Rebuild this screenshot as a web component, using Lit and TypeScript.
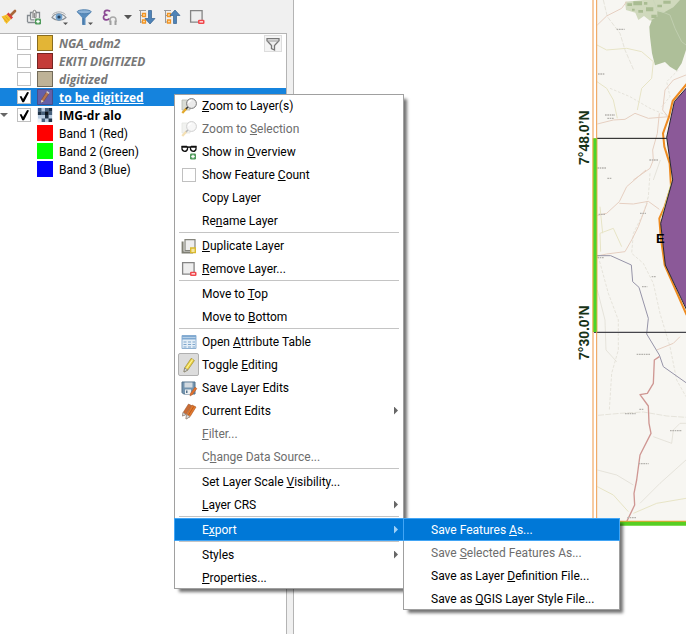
import { LitElement, html, svg, css, nothing, TemplateResult } from "lit";
import { customElement, property } from "lit/decorators.js";
import { classMap } from "lit/directives/class-map.js";
import { styleMap } from "lit/directives/style-map.js";

type Glyph = ReturnType<typeof svg>;

const plus = svg`<rect x="10" y="10.500" width="6" height="6" rx="1.200" fill="#4f9a5b"/><path d="M13 11.700v3.600M11.200 13.500h3.600" stroke="#fff" stroke-width="1.300"/>`;
const minus = svg`<rect x="10" y="11.700" width="6.500" height="4.300" rx="1.300" fill="#f0474c"/><path d="M11.500 13.850h3.500" stroke="#fff" stroke-width="1.200"/>`;
const caret = svg`<path d="M13 14.500h5l-2.500 2.500z" fill="#555"/>`;
const treeLines = svg`<path d="M1 2.500h7M2.500 3v12M2.500 7.500h3M2.500 14h3" stroke="#9a9a9a" fill="none"/><path d="M4.500 5.500h3v3h-3zM4.500 12h3v3h-3z" fill="#fbe3b8" stroke="#f29423" stroke-width="1.300"/>`;

const glyphs: Record<string, Glyph> = {
  style: svg`<path d="M10.500 7.500 15 3" stroke="#a9683a" stroke-width="2.600" stroke-linecap="round"/><path d="M7.500 5.500 12 10.500" stroke="#d8433d" stroke-width="2.800"/><path d="M1.500 8.500 7 6.500l4 4.500-4.500 5c-.6-1-1-1.500-2-2.200-.5-2-1.500-3-3-5.300z" fill="#f6c12d"/><path d="m3 9.500 4 4.500M5.500 8.500l3.500 4" stroke="#d99a1a" stroke-width=".8"/>`,
  group: svg`<path d="M2.500 14V7.500H5M2.500 14.500h8M5.500 11.500V4.500h2m3.500 0h3.500V10M5.500 11.800h4" stroke="#858b90" stroke-width="1.300" fill="none"/><path d="M8 10V4q0-1.700 1.500-1.700T11 4v5q0 1-.9 1T9.300 9V5" stroke="#777" fill="none"/>${plus}`,
  eye: svg`<path d="M2 9.500C5 4.500 12 4.500 16 9.500 12 13.500 6 13.500 2 9.500z" fill="#e9edf0" stroke="#8a8f94" stroke-width="1.200"/><path d="M2.500 6.500C6 3 12 3 15.500 6.500" stroke="#a9adb0" fill="none"/><circle cx="9" cy="9" r="3.400" fill="#6fa0cc"/><circle cx="9" cy="9" r="1.600" fill="#27415c"/>${caret}`,
  funnel: svg`<path d="M2.500 4.500 7.300 10v7h3.200v-7l5.500-5.500z" fill="#5a8dbd"/><ellipse cx="9.200" cy="3.800" rx="7" ry="2" fill="#8db3d8" stroke="#4d7fae"/><path d="M8 10v6.500" stroke="#3c6d9c"/>${caret}`,
  expression: svg`<path d="M10 3.500C9 1.800 4.300 2 4.400 4.700c0 1.600 1.400 2.100 3.100 2.100-2.500 0-4 .7-4 2.600C3.500 12.300 8 12.500 9.500 10.500" stroke="#8c4a94" stroke-width="1.700" fill="none"/><path d="M10 14v-2a3 3 0 0 1 6 0v2" stroke="#a8a8a8" stroke-width="1.400" fill="none"/><path d="M10.500 12.500V17M15.500 12.500V17" stroke="#a0a0a0" stroke-width="2"/>`,
  drop: svg`<path d="M5 7h8l-4 4.300z" fill="#555"/>`,
  expand: svg`${treeLines}<path d="M10.500 2.500h3v8H17l-5 5.500-5-5.500h3.500z" fill="#4e83b8" stroke="#35628f" stroke-width=".7"/>`,
  collapse: svg`${treeLines}<path d="M10.500 15.500h3v-8H17L12 2 7 7.500h3.500z" fill="#4e83b8" stroke="#35628f" stroke-width=".7"/>`,
  remove: svg`<path d="M2.600 2.600h11.500v11.500H2.600z" fill="#eee" stroke="#858585" stroke-width="1.300"/>${minus}`,
  filterBox: svg`<path d="M3 3.700h12v2L10.500 10.500V15l-3-1.500v-3L3 5.700z" fill="#eee" stroke="#777" stroke-width="1.300"/><path d="M3 6h12" stroke="#999"/>`,
  zoom: svg`<path d="M2 3h8v10H2z" fill="#d9dcd5" stroke="#b4b8ae" stroke-width=".8"/><path d="m2.300 16 4.300-4.700" stroke="#e2a92c" stroke-width="2.300"/><path d="M6 12 8 9.800" stroke="#333" stroke-width="1.500"/><circle cx="11.500" cy="6.500" r="4.900" fill="#ebebeb" stroke="#777"/><path d="M8.500 6a3 3 0 0 1 3-2.500" stroke="#fff" fill="none" stroke-width="1.400"/>`,
  overview: svg`<path d="M1.500 3.500h5.500M11 3.500h5.500M7.500 4.500q1.500-1 3 0" stroke="#111" stroke-width="1.300" fill="none"/><path d="M2 4h5.500v2q-.5 2.300-2.700 2.300T2 6zM10.500 4H16v2q-.5 2.300-2.700 2.300T10.500 6z" fill="#fff" stroke="#111" stroke-width="1.300"/>${plus}`,
  duplicate: svg`<path d="M2.600 4.500v11h10.500" stroke="#7f7f74" stroke-width="2" fill="none"/><path d="M5 2.600h10v11H5z" fill="#eee" stroke="#85857c" stroke-width="1.200"/><path d="M10.700 11h4.600v4.600h-4.600z" fill="#f5e6a3" stroke="#d9b92e" stroke-width="1.400"/>`,
  table: svg`<path d="M2 2.500h14v13H2z" fill="#e4eef7" stroke="#8fb1d3"/><path d="M2 2.500h14v4H2z" fill="#7fa9d1"/><path d="M3.500 9h3M8 9h3M12.500 9h2.500M3.500 11.500h3M8 11.500h3M12.500 11.500h2.500M3.500 14h3M8 14h3M12.500 14h2.500" stroke="#7ea6cc" stroke-width="1.200"/><path d="M2.500 4.500h13" stroke="#b5cfe7"/>`,
  pencil: svg`<path d="m4 16 .6-4L11.200 2.300l3.200 2.200L7.800 14z" fill="#ead23f" stroke="#a69342" stroke-width=".8"/><path d="m6.200 12.800 6.500-9.300" stroke="#fff3a0" stroke-width="1.100"/><path d="m4 16 .6-4 3.200 2z" fill="#ddd" stroke="#777" stroke-width=".7"/>`,
  save: svg`<path d="M2 3h13v12H3.500L2 13.500z" fill="#7495b0" stroke="#54728b"/><path d="M4.500 3.500h8v5h-8z" fill="#d3dae0"/><path d="M5 10.500h6v4.500H5z" fill="#eef0f1"/><path d="M6 11.500h1.500V14H6z" fill="#54728b"/><path d="m10 17 .6-2.800 4.400-6 1.900 1.400-4.400 6z" fill="#e2722e" stroke="#ad5320" stroke-width=".5"/>`,
  pencils: svg`<path d="m2.500 14 .6-3.500L8.500 2l3 1.500-5.500 9z" fill="#c96c35" stroke="#93502a" stroke-width=".5"/><path d="m6 17 .6-4.500L12 3l4 2-6 9.700z" fill="#e57a2c" stroke="#a5521f" stroke-width=".6"/><path d="m8.400 13.200 5.600-9" stroke="#b85a20"/><path d="m6 17 .6-4.500 3.400 2.200zM2.500 14l.6-3.500 2.900 2z" fill="#ddd" stroke="#888" stroke-width=".6"/>`,
  raster: svg`<path d="M1 1h16v16H1z" fill="#b8cbe0"/><path d="M1 1h4v4H1zM9 1h4v4H9zM13 5h4v4h-4zM5 5h4v4H5zM5 13h4v4H5z" fill="#47617c"/><path d="M9 9h4v4H9zM13 13h4v4h-4zM13 1h4v4h-4zM1 5h4v4H1z" fill="#1f3246"/><path d="M9 5h4v4H9z" fill="#0d151e"/><path d="M1 13h4v4H1z" fill="#e8eff6"/>`,
  editing: svg`<path d="M.5 .5h17v17H.5z" fill="#6460a8" stroke="#4a477e"/><path d="m4.500 15.500.5-3.500 5.800-8.800 2.700 1.800L7.600 13.800z" fill="#b9754e" stroke="#70452e" stroke-width=".6"/><path d="m4.500 15.500.5-3.500 2.600 1.800z" fill="#ddd"/><path d="m10.800 3 2.900 1.900" stroke="#ccc" stroke-width="1.700"/>`,
};

const icon = (name: string, cls = "icon") =>
  html`<svg class=${cls} viewBox="0 0 18 18" aria-hidden="true">${glyphs[name]}</svg>`;

const base = css`
  :host { font: 12px/18px Roboto, "Noto Sans", sans-serif; color: #000; }
  button { font: inherit; color: inherit; border: 0; background: none; margin: 0; padding: 0; }
  .icon { width: 18px; height: 18px; flex: none; display: block; }
  input { appearance: none; width: 14px; height: 14px; margin: 0; flex: none; background: #fff; border: 1px solid #c0c0c0; display: grid; }
  input:checked::before { content: ""; background: #000; clip-path: polygon(14% 46%, 28% 42%, 42% 66%, 76% 8%, 92% 12%, 50% 94%, 36% 94%); }
`;

interface Entry {
  label: string; // "&" precedes the access key
  icon?: string;
  check?: boolean;
  disabled?: boolean;
  pressed?: boolean;
  active?: boolean;
  sub?: Entry[] | true;
}

@customElement("context-menu")
class ContextMenu extends LitElement {
  @property({ attribute: false }) groups: Entry[][] = [];

  static styles = [base, css`
    :host { display: block; background: #fff; box-shadow: inset 0 0 0 1px #a0a0a0, 4px 4px 3px -1px rgba(0, 0, 0, 0.55); }
    ul { list-style: none; margin: 0; padding: 0; }
    li { position: relative; }
    .rule { height: 1px; margin: 0 5px 1px; background: #c4c4c4; }
    .item { display: flex; align-items: center; gap: 3px; width: 100%; height: 23px; padding: 0 6px 0 4px; text-align: left; white-space: nowrap; }
    .item:disabled { color: #6d6d6d; }
    .item:disabled .slot { opacity: 0.35; }
    .active { background: #0078d7; color: #fff; box-shadow: inset 0 0 0 1px #42a5f5; }
    .slot { width: 21px; height: 23px; box-sizing: border-box; flex: none; display: flex; align-items: center; justify-content: center; }
    .pressed { background: #dcdcdc; border: 1px solid #b0b0b0; border-radius: 2px; }
    .text { flex: 1; }
    u { text-underline-offset: 1px; text-decoration-skip-ink: none; }
    .arrow { width: 4px; height: 8px; background: #666; clip-path: polygon(0 0, 100% 50%, 0 100%); }
    .active .arrow { background: #9fd0f7; }
    .submenu { position: absolute; left: calc(100% - 1px); top: 0; width: 217px; z-index: 1; }
  `];

  private caption(label: string): TemplateResult {
    const at = label.indexOf("&");
    return at < 0
      ? html`${label}`
      : html`${label.slice(0, at)}<u>${label[at + 1]}</u>${label.slice(at + 2)}`;
  }

  private entry(e: Entry) {
    const slot = html`<span class=${classMap({ slot: true, pressed: !!e.pressed })}>${e.icon ? icon(e.icon) : nothing}</span>`;
    if (e.check) {
      return html`<li><label class="item"><span class="slot"><input type="checkbox" /></span><span class="text">${this.caption(e.label)}</span></label></li>`;
    }
    return html`<li>
      <button class=${classMap({ item: true, active: !!e.active })} ?disabled=${e.disabled}>
        ${slot}<span class="text">${this.caption(e.label)}</span>${e.sub ? html`<span class="arrow"></span>` : nothing}
      </button>
      ${Array.isArray(e.sub) ? html`<context-menu class="submenu" .groups=${[e.sub]}></context-menu>` : nothing}
    </li>`;
  }

  render() {
    return html`<ul>${this.groups.map((g, i) => html`${i ? html`<li class="rule"></li>` : nothing}${g.map((e) => this.entry(e))}`)}</ul>`;
  }
}

@customElement("map-view")
class MapView extends LitElement {
  static styles = css`
    :host { display: block; background: #fff; overflow: hidden; }
    svg { display: block; width: 100%; height: 100%; }
    .degree { font: bold 14px "Liberation Sans", sans-serif; fill: #173317; }
    .place { font: bold 13px "Liberation Sans", sans-serif; fill: #000; }
  `;

  render() {
    return html`<svg viewBox="294 0 392 634" preserveAspectRatio="xMinYMin slice" role="img" aria-label="Map">
      <g transform="translate(570 0) scale(.33333)" fill="none" stroke-linejoin="round">
        <path d="M81 0H348V1566H81z" fill="#f7f6f2"/>
        <path d="M222 0H348V150L335 190 320 212 300 200 285 186 255 196 246 160 240 110 238 80 245 62 222 38z" fill="#aebf99"/>
        <path d="M165 5 222 0 330 0 310 22 280 38 262 34 262 50 240 62 222 48 205 60 196 38 168 30z" fill="#d0d9bd"/>
        <path d="M172 10h14v8h-14zM190 4h26v12h-26zM228 22h22v12h-22zM205 30h14v8h-14zM186 26h8v6h-8zM244 44h16v10h-16zM280 2h22v9h-22zM262 14h14v8h-14zM222 6h10v8h-10z" fill="#a9bc92"/>
        <path d="M250 0 262 30 300 45 315 85 335 125 348 135" stroke="#c9d4b9" stroke-width="2"/>
        <g stroke="#dcd9cf" stroke-width="2">
          <path d="M100 0 112 50 150 100 165 150 192 212" stroke-dasharray="14 4"/>
          <path d="M120 265 180 290 240 325 300 350M325 210 290 245 300 290 275 320" stroke-dasharray="8 5"/>
          <path d="M240 520 235 590 220 640 190 700 185 760 220 790 250 850 270 940 300 1040 320 1140 348 1190" stroke-dasharray="9 5"/>
          <path d="M85 770 115 880 145 960 145 1050 125 1120 118 1230" stroke-dasharray="9 5"/>
          <path d="M84 1246 150 1240 220 1236 290 1248 348 1252" stroke-dasharray="18 4"/>
          <path d="M250 1310 305 1330 310 1290 330 1270 348 1270M82 1410 140 1425 190 1455M210 1510 270 1450 348 1380"/>
          <path d="M271 480 250 540M82 870 105 960 108 1050 140 1085"/>
        </g>
        <g stroke="#e7e4c6" stroke-width="3">
          <path d="M81 135 110 150 170 145 215 155 250 185 245 235 215 265 202 330"/>
          <path d="M81 245 110 265 130 300 142 355M92 755 90 700 130 685 155 740M90 620 98 700"/>
          <path d="M82 1460 130 1485 175 1535M190 1540 260 1510 348 1495"/>
        </g>
        <g stroke="#e6cfc1" stroke-width="3">
          <path d="M82 75 110 48 155 25 170 5"/>
          <path d="M82 372 130 360 165 358 195 340 235 355 298 350"/>
          <path d="M268 340 262 400 248 450 250 480 240 505 190 540"/>
          <path d="M228 510 170 560 148 605 110 640 82 646M148 610 190 612 235 604 268 628M232 608 205 680 185 720 165 755 110 762 82 768"/>
          <path d="M348 225 310 240 285 270 278 330 298 355"/>
          <path d="M260 1050 285 1040 310 1030 330 1010"/>
        </g>
        <path d="M81 767H122L184 795 188 845 207 862 235 955 230 1002 268 1065 280 1100 348 1148" stroke="#9694a8" stroke-width="3"/>
        <path d="M268 1070 253 1080 250 1150 232 1180 210 1184 235 1218 237 1270 243 1300 210 1365 200 1440 192 1480 194 1515 170 1565" stroke="#cf9793" stroke-width="4"/>
        <path d="M140 88h24M84 222h20M105 345h30M112 355h20M238 480h28M82 504h28M86 643h20M112 535h14M210 640h18M216 860h16M200 1063h40M165 1241h32M300 1292h36M206 1391h30M172 1553h26M208 1228h14M82 773h20M245 830h12" stroke="#b5b3ae" stroke-width="4" stroke-dasharray="5 2"/>
        <path d="M350 252 308 303 297 350 279 400 283 440 299 490 303 560 284 620 268 655 272 710 284 795 350 945" stroke="#ee8b20" stroke-width="6"/>
        <path d="M304 548 276 650" stroke="#d6e08a" stroke-width="3"/>
        <path d="M1100 0H348V265L313 305 290 412 308 540 272 670 286 795 348 925 1100 1500z" fill="#8b5998"/>
        <path d="M350 263 313 305 290 412 308 540 272 670 286 795 350 930" stroke="#292831" stroke-width="3"/>
        <path d="M80 415H290" stroke="#111" stroke-width="3"/>
        <path d="M72 997H1100" stroke="#45454b" stroke-width="3.500"/>
        <path d="M69 0V1566" stroke="#f6c190" stroke-width="5"/>
        <path d="M80 0V1566" stroke="#ed9c4c" stroke-width="3"/>
        <path d="M75 415V996" stroke="#e0b13c" stroke-width="14"/>
        <path d="M75 415V996" stroke="#4ad42c" stroke-width="9"/>
        <path d="M78 1564H1100" stroke="#efa33e" stroke-width="4"/>
        <path d="M78 1571H1100" stroke="#57cf22" stroke-width="12"/>
      </g>
      <text class="place" x="656" y="243">E</text>
      <text class="degree" transform="translate(589 165) rotate(-90)">7°48.0’N</text>
      <text class="degree" transform="translate(589 360) rotate(-90)">7°30.0’N</text>
    </svg>`;
  }
}

interface Layer {
  name: string;
  checked?: boolean;
  color?: string;
  icon?: string;
  kind: string;
}

const layers: Layer[] = [
  { name: "NGA_adm2", color: "#e3b536", kind: "hidden-layer", checked: false },
  { name: "EKITI DIGITIZED", color: "#c43c39", kind: "hidden-layer", checked: false },
  { name: "digitized", color: "#beb297", kind: "hidden-layer", checked: false },
  { name: "to be digitized", icon: "editing", kind: "selected", checked: true },
  { name: "IMG-dr alo", icon: "raster", kind: "open", checked: true },
  { name: "Band 1 (Red)", color: "#ff0000", kind: "band" },
  { name: "Band 2 (Green)", color: "#00ff00", kind: "band" },
  { name: "Band 3 (Blue)", color: "#0000ff", kind: "band" },
];

const tools: [string, string][] = [
  ["style", "Open layer styling"],
  ["group", "Add group"],
  ["eye", "Manage map themes"],
  ["funnel", "Filter legend"],
  ["expression", "Filter by expression"],
  ["drop", "Expression options"],
  ["expand", "Expand all"],
  ["collapse", "Collapse all"],
  ["remove", "Remove layer"],
];

const menu: Entry[][] = [
  [
    { label: "&Zoom to Layer(s)", icon: "zoom" },
    { label: "Zoom to &Selection", icon: "zoom", disabled: true },
    { label: "Show in &Overview", icon: "overview" },
    { label: "Show Feature &Count", check: true },
    { label: "Copy Layer" },
    { label: "Re&name Layer" },
  ],
  [
    { label: "&Duplicate Layer", icon: "duplicate" },
    { label: "&Remove Layer...", icon: "remove" },
  ],
  [{ label: "Move to &Top" }, { label: "Move to &Bottom" }],
  [
    { label: "Open &Attribute Table", icon: "table" },
    { label: "Toggle &Editing", icon: "pencil", pressed: true },
    { label: "Save Layer Edits", icon: "save" },
    { label: "Current Edits", icon: "pencils", sub: true },
    { label: "&Filter...", disabled: true },
    { label: "C&hange Data Source...", disabled: true },
  ],
  [{ label: "Set Layer Scale &Visibility..." }, { label: "&Layer CRS", sub: true }],
  [
    {
      label: "E&xport",
      active: true,
      sub: [
        { label: "Save Features &As...", active: true },
        { label: "Save &Selected Features As...", disabled: true },
        { label: "Save as Layer &Definition File..." },
        { label: "Save as &QGIS Layer Style File..." },
      ],
    },
  ],
  [{ label: "Styles", sub: true }, { label: "&Properties..." }],
];

@customElement("app-root")
class AppRoot extends LitElement {
  static styles = [base, css`
    :host { display: grid; grid-template-columns: 294px 1fr; height: 100vh; position: relative; overflow: hidden; background: #fff; }
    .dock { display: flex; flex-direction: column; background: #f0f0f0; border-right: 1px solid #b4b4b4; padding-right: 6px; }
    .toolbar { display: flex; align-items: center; gap: 7px; height: 33px; }
    .tool { width: 18px; height: 18px; overflow: hidden; display: flex; justify-content: center; }
    .drop { width: 6px; overflow: visible; }
    .tree { flex: 1; position: relative; background: #fff; border: solid #b4b4b4; border-width: 1px 1px 0 0; }
    ul { list-style: none; margin: 0; padding: 0; }
    .row { display: flex; align-items: center; height: 18px; gap: 6px; padding-left: 17px; position: relative; }
    .hidden-layer { color: #777; font-style: italic; }
    .hidden-layer, .selected, .open { font-family: "Open Sans", sans-serif; font-weight: bold; }
    .selected { background: #1583dd; color: #fff; text-decoration: underline; }
    .open::before { content: ""; position: absolute; left: 0; width: 8px; height: 4px; background: #666; clip-path: polygon(0 0, 100% 0, 50% 100%); }
    .band { padding-left: 37px; }
    .swatch { width: 16px; height: 16px; box-sizing: border-box; border: 1px solid rgba(0, 0, 0, 0.4); flex: none; }
    .band .swatch { border: 0; }
    .layer-icon { width: 16px; height: 16px; flex: none; }
    .name { line-height: 16px; padding-top: 2px; }
    .filter { position: absolute; top: 1px; right: 4px; width: 18px; height: 17px; background: #f4f4f4; border: 1px solid #ddd; display: flex; align-items: center; justify-content: center; }
    .menu { position: absolute; left: 174px; top: 94px; width: 230px; }
  `];

  private row(l: Layer) {
    const id = l.name.replace(/\W/g, "");
    return html`<li class="row ${l.kind}">
      ${l.checked === undefined ? nothing : html`<input type="checkbox" id=${id} .checked=${l.checked} />`}
      ${l.icon ? icon(l.icon, "layer-icon") : html`<span class="swatch" style=${styleMap({ background: l.color })}></span>`}
      ${l.checked === undefined ? html`<span class="name">${l.name}</span>` : html`<label class="name" for=${id}>${l.name}</label>`}
    </li>`;
  }

  render() {
    return html`
      <section class="dock">
        <div class="toolbar">
          ${tools.map(([name, title]) => html`<button class="tool ${name}" aria-label=${title}>${icon(name)}</button>`)}
        </div>
        <div class="tree">
          <ul>${layers.map((l) => this.row(l))}</ul>
          <button class="filter" aria-label="Layer filter">${icon("filterBox")}</button>
        </div>
      </section>
      <map-view></map-view>
      <context-menu class="menu" .groups=${menu}></context-menu>
    `;
  }
}
